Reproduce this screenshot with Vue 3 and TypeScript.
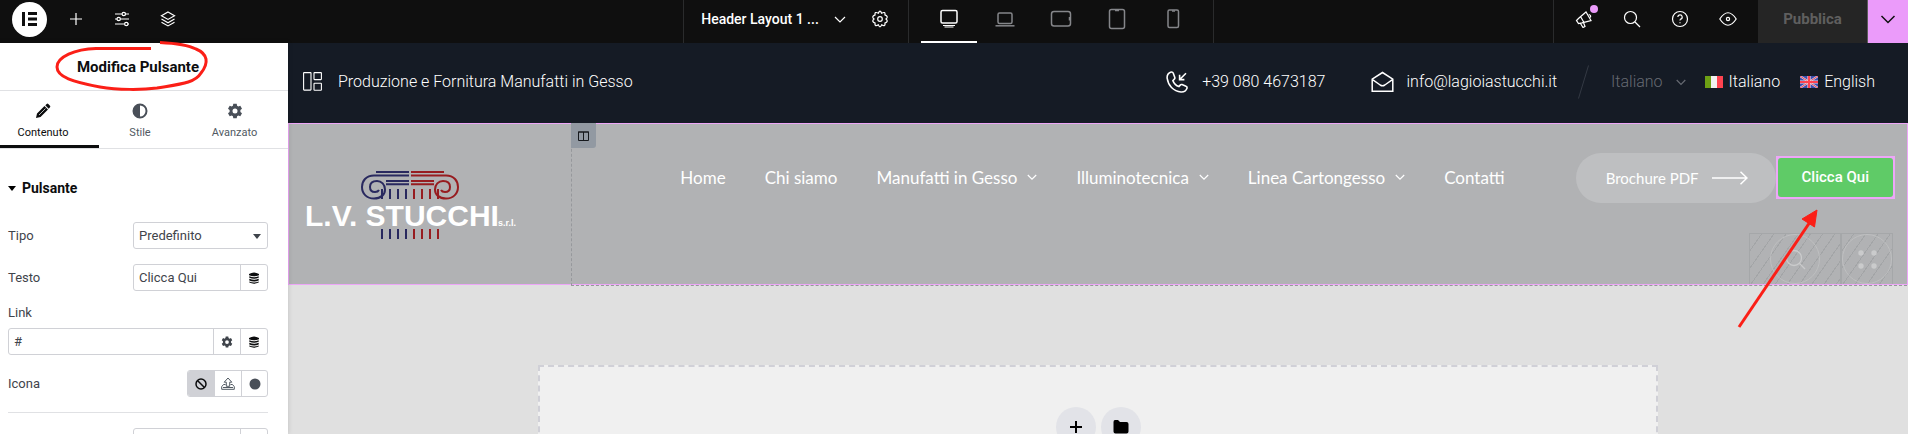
<script setup lang="ts">
import { ref } from 'vue'

interface NavItem {
  label: string
  menu: boolean
}

const nav: NavItem[] = [
  { label: 'Home', menu: false },
  { label: 'Chi siamo', menu: false },
  { label: 'Manufatti in Gesso', menu: true },
  { label: 'Illuminotecnica', menu: true },
  { label: 'Linea Cartongesso', menu: true },
  { label: 'Contatti', menu: false },
]

const tab = ref('Contenuto')
const device = ref('desktop')
const tipo = ref('Predefinito')
const testo = ref('Clicca Qui')
const link = ref('#')
const extra = ref('')
const fluteXs = [78, 86, 94, 102, 110, 118, 126, 134]
</script>

<template>
  <div class="editor">
    <header class="bar">
      <div class="bar-left">
        <button class="brand" aria-label="Menu">
          <svg width="35" height="35" viewBox="0 0 35 35"><circle cx="17.5" cy="17.5" r="17.5" fill="#fff" /><path d="M10 10h3v14h-3zM16 10h9v3h-9zM16 15.500h9v3h-9zM16 21h9v3h-9z" fill="#0f0f0f" /></svg>
        </button>
        <button class="tool" aria-label="Aggiungi">
          <svg width="16" height="16" viewBox="0 0 16 16"><path d="M8 2v12M2 8h12" class="ln" /></svg>
        </button>
        <button class="tool" aria-label="Impostazioni sito">
          <svg width="16" height="16" viewBox="0 0 16 16" class="ln"><path d="M1 3h7M11.500 3H15M1 8h2M6.500 8H15M1 13h9.500M14 13h1" /><circle cx="9.800" cy="3" r="1.700" /><circle cx="4.700" cy="8" r="1.700" /><circle cx="12.300" cy="13" r="1.700" /></svg>
        </button>
        <button class="tool" aria-label="Struttura">
          <svg width="16" height="16" viewBox="0 0 16 16" class="ln"><path d="M8 1l6.500 3.700L8 8.400 1.500 4.700zM1.500 8L8 11.700 14.500 8M1.500 11.200L8 14.900l6.500-3.700" /></svg>
        </button>
      </div>

      <div class="bar-doc">
        <button class="doc">Header Layout 1 ...
          <svg width="12" height="12" viewBox="0 0 12 12" class="ln"><path d="M1 4l5 5 5-5" /></svg>
        </button>
        <button class="gear" aria-label="Impostazioni pagina">
          <svg width="18" height="18" viewBox="0 0 18 18" class="ln"><path d="M7.400 3.200Q9-1 10.600 3.200 14.800 1.200 13.900 4.900 18 6.500 15 9 18 11.500 13.900 13.100 14.800 16.800 10.600 14.900 9 19 7.400 14.900 3.200 16.800 4.100 13.100 0 11.500 3 9 0 6.500 4.100 4.900 3.200 1.200 7.400 3.200z" /><circle cx="9" cy="9" r="2.300" /></svg>
        </button>
      </div>

      <div class="bar-devices">
        <button :class="['device', { on: device === 'desktop' }]" aria-label="Desktop" @click="device = 'desktop'">
          <svg width="20" height="20" viewBox="0 0 20 20"><rect x="2" y="1.500" width="16" height="12.500" rx="1.500" /><path d="M4 16.500h12M5.500 18h9" stroke-width="1" /></svg>
        </button>
        <button :class="['device', { on: device === 'laptop' }]" aria-label="Laptop" @click="device = 'laptop'">
          <svg width="20" height="20" viewBox="0 0 20 20"><rect x="3" y="4" width="14" height="10.500" rx="1.500" /><path d="M.500 16.800h19" /></svg>
        </button>
        <button :class="['device', { on: device === 'tablet-l' }]" aria-label="Tablet orizzontale" @click="device = 'tablet-l'">
          <svg width="22" height="20" viewBox="0 0 22 20"><rect x="1.500" y="2.500" width="19" height="14.500" rx="2.500" /><path d="M19.500 8v3.500" /></svg>
        </button>
        <button :class="['device', { on: device === 'tablet' }]" aria-label="Tablet" @click="device = 'tablet'">
          <svg width="20" height="22" viewBox="0 0 20 22"><rect x="2.500" y="1.500" width="15" height="19" rx="2" /><path d="M8 2.500h4" /></svg>
        </button>
        <button :class="['device', { on: device === 'phone' }]" aria-label="Telefono" @click="device = 'phone'">
          <svg width="20" height="22" viewBox="0 0 20 22"><rect x="5" y="2" width="10.500" height="17.500" rx="1.500" /><path d="M9 3h3" /></svg>
        </button>
      </div>

      <div class="bar-right">
        <div class="actions">
          <button class="act" aria-label="Novità">
            <svg width="18" height="18" viewBox="0 0 18 18" class="ln"><path d="M1.500 10.500L4 8l7-6 5 8.500-9 2.300-3.500.800zM5.800 7l3 5.200M5.500 13.500L8 17.500l2-1-1.500-4M13.800 4.500a2 2 0 0 1 1.500 3" /></svg>
            <i class="dot"></i>
          </button>
          <button class="act" aria-label="Cerca">
            <svg width="18" height="18" viewBox="0 0 18 18" class="ln"><circle cx="7.500" cy="7.500" r="6" /><path d="M12 12l5 5" /></svg>
          </button>
          <button class="act" aria-label="Aiuto">
            <svg width="18" height="18" viewBox="0 0 18 18" class="ln"><circle cx="9" cy="9" r="7.500" /><path d="M6.800 7a2.200 2.200 0 1 1 2.700 2.200Q9 9.400 9 10.500M9 12.300v1" /></svg>
          </button>
          <button class="act" aria-label="Anteprima">
            <svg width="18" height="18" viewBox="0 0 18 18" class="ln"><path d="M.800 9Q9-3.500 17.200 9 9 21.500.800 9z" /><circle cx="9" cy="9" r="1.600" /></svg>
          </button>
        </div>
        <button class="publish" disabled>Pubblica</button>
        <button class="publish-more" aria-label="Opzioni di salvataggio">
          <svg width="16" height="16" viewBox="0 0 16 16"><path d="M1.500 5L8 11.500 14.500 5" fill="none" stroke="#0f0f0f" stroke-width="1.500" /></svg>
        </button>
      </div>
    </header>

    <div class="work">
      <aside class="panel">
        <h1 class="panel-title">Modifica Pulsante</h1>
        <svg class="mark" width="158" height="52" viewBox="0 0 158 52"><path d="M98 7.500H43C22 8 4 16 4 26c0 10 16 15 43 20 18 3 42 3 57 1 24-4 38-5 44-15 8-10 7-19-5-24-10-5-26-6-36-6.500" fill="none" stroke="#fb1f17" stroke-width="3" /></svg>
        <nav class="tabs">
          <button :class="{ on: tab === 'Contenuto' }" @click="tab = 'Contenuto'">
            <svg width="16" height="16" viewBox="0 0 16 16"><path d="M1 15l1-4.500 7.500-7.500 3.500 3.500L5.500 14zM10.300 2.200l1.400-1.300q.800-.600 1.600.100l1.700 1.700q.700.800 0 1.600l-1.300 1.400z" /><path d="M4 12l6.500-6.500" stroke="#fff" stroke-width=".7" /></svg>
            <span>Contenuto</span>
          </button>
          <button :class="{ on: tab === 'Stile' }" @click="tab = 'Stile'">
            <svg width="16" height="16" viewBox="0 0 16 16"><path fill-rule="evenodd" d="M8 .500a7.500 7.500 0 1 1 0 15 7.500 7.500 0 0 1 0-15zm0 2v11a5.500 5.500 0 0 0 0-11z" /></svg>
            <span>Stile</span>
          </button>
          <button :class="{ on: tab === 'Avanzato' }" @click="tab = 'Avanzato'">
            <svg width="16" height="16" viewBox="0 0 16 16"><path fill-rule="evenodd" d="M6.300.800h3.400l.400 2 1.200.700 2-.700 1.700 2.900-1.600 1.400v1.800l1.600 1.400-1.700 2.900-2-.700-1.200.700-.400 2H6.300l-.400-2-1.200-.700-2 .700L1 10.300l1.600-1.400V7.100L1 5.700l1.700-2.900 2 .700 1.200-.700zM8 5.500a2.500 2.500 0 1 0 0 5 2.500 2.500 0 0 0 0-5z" /></svg>
            <span>Avanzato</span>
          </button>
        </nav>

        <section class="controls">
          <h2><svg width="8" height="5" viewBox="0 0 8 5"><path d="M0 0h8L4 5z" /></svg>Pulsante</h2>

          <div class="row">
            <label for="tipo">Tipo</label>
            <span class="field">
              <select id="tipo" v-model="tipo"><option>Predefinito</option></select>
              <svg class="caret" width="8" height="5" viewBox="0 0 8 5"><path d="M0 0h8L4 5z" /></svg>
            </span>
          </div>

          <div class="row">
            <label for="testo">Testo</label>
            <span class="field">
              <input id="testo" v-model="testo" type="text" />
              <button aria-label="Tag dinamici"><svg width="10" height="12" viewBox="0 0 10 12" class="db"><path d="M0 2q5-3 10 0v1.200q-5 2.200-10 0zM.300 4.200q4.700 2 9.400 0v1.600q-4.700 2-9.400 0zM.300 6.800q4.700 2 9.400 0v1.600q-4.700 2-9.400 0zM.300 9.400q4.700 2 9.400 0v1.200q-4.700 2.300-9.400 0z" /></svg></button>
            </span>
          </div>

          <div class="stack">
            <label for="link">Link</label>
            <span class="field wide">
              <input id="link" v-model="link" type="text" />
              <button aria-label="Opzioni link"><svg width="12" height="12" viewBox="0 0 16 16"><path fill-rule="evenodd" d="M6.300.800h3.400l.400 2 1.200.700 2-.700 1.700 2.900-1.600 1.400v1.800l1.600 1.400-1.700 2.900-2-.700-1.200.700-.400 2H6.300l-.400-2-1.200-.700-2 .700L1 10.300l1.600-1.400V7.100L1 5.700l1.700-2.900 2 .700 1.200-.700zM8 5.500a2.500 2.500 0 1 0 0 5 2.500 2.500 0 0 0 0-5z" /></svg></button>
              <button aria-label="Tag dinamici"><svg width="10" height="12" viewBox="0 0 10 12" class="db"><path d="M0 2q5-3 10 0v1.200q-5 2.200-10 0zM.300 4.200q4.700 2 9.400 0v1.600q-4.700 2-9.400 0zM.300 6.800q4.700 2 9.400 0v1.600q-4.700 2-9.400 0zM.300 9.400q4.700 2 9.400 0v1.200q-4.700 2.300-9.400 0z" /></svg></button>
            </span>
          </div>

          <div class="row">
            <span>Icona</span>
            <span class="field choices">
              <button class="picked" aria-label="Nessuna"><svg width="12" height="12" viewBox="0 0 12 12"><circle cx="6" cy="6" r="5" fill="none" stroke="#0c0d0e" stroke-width="1.500" /><path d="M2.500 2.500l7 7" stroke="#0c0d0e" stroke-width="1.500" /></svg></button>
              <button aria-label="Carica SVG"><svg width="14" height="13" viewBox="0 0 14 13"><path d="M4.500 7.500H2.500L.700 9.700v2.600h12.600V9.700l-1.800-2.200h-2M5.300 9.300V5.200H3.200L7 1l3.800 4.200H8.700v4.100zM2 10.500h10" fill="none" stroke="#515962" stroke-width="1" /></svg></button>
              <button aria-label="Libreria icone"><svg width="12" height="12" viewBox="0 0 12 12"><circle cx="6" cy="6" r="5.500" fill="#494f58" /></svg></button>
            </span>
          </div>

          <hr />

          <div class="row">
            <span></span>
            <span class="field">
              <input v-model="extra" type="text" aria-label="ID pulsante" />
              <button aria-label="Tag dinamici"></button>
            </span>
          </div>
        </section>
      </aside>

      <main class="canvas">
        <div class="info">
          <div class="info-left">
            <svg width="19" height="19" viewBox="0 0 19 19" fill="none" stroke="#fff" stroke-width="1.100"><rect x=".600" y=".600" width="7.400" height="17.500" rx=".5" /><rect x="11" y=".600" width="7.400" height="7" rx=".5" /><rect x="11" y="11.200" width="7.400" height="7" rx=".5" /></svg>
            <span>Produzione e Fornitura Manufatti in Gesso</span>
          </div>
          <div class="info-right">
            <a class="phone" href="#">
              <svg width="22" height="22" viewBox="0 0 22 22" fill="none" stroke="#fff" stroke-width="1.600"><path d="M4.500 1.200Q1 2.500 1.100 7 2 13 5.500 16.500 9.500 20.500 15 21q4.500.300 6-3.700.300-1.500-1-2L16 13.600q-1-.400-1.800.500l-1.300 1.500q-4.300-1.500-6-6L8.300 8.200q.800-.7.500-1.800L7.200 2Q6.500.500 4.500 1.200zM20 2.200l-6.300 6.300M13.600 3.800v4.800h4.800" /></svg>
              +39 080 4673187
            </a>
            <a class="mail" href="#">
              <svg width="23" height="22" viewBox="0 0 23 22" fill="none" stroke="#fff" stroke-width="1.500"><path d="M1.200 8.200L11.500 1.500l10.300 6.700v12H1.200zM1.200 8.400l8 5.600q2.300 1.500 4.600 0l8-5.600" /></svg>
              info@lagioiastucchi.it
            </a>
            <svg class="slash" width="11" height="34" viewBox="0 0 11 34"><path d="M10.500.500L.500 33.500" stroke="#343a44" /></svg>
            <button class="lang">Italiano
              <svg width="10" height="10" viewBox="0 0 10 10"><path d="M.700 3L5 7.300 9.300 3" fill="none" stroke="#666a72" stroke-width="1.200" /></svg>
            </button>
            <a class="flag" href="#">
              <svg width="18" height="12" viewBox="0 0 18 12"><path d="M0 0h6v12H0z" fill="#6da014" /><path d="M6 0h6v12H6z" fill="#f1f1f1" /><path d="M12 0h6v12h-6z" fill="#ff4350" /></svg>
              Italiano
            </a>
            <a class="flag" href="#">
              <svg width="18" height="12" viewBox="0 0 18 12"><path d="M0 0h18v12H0z" fill="#3a4db0" /><path d="M0 0l18 12M18 0L0 12" stroke="#d8d8ea" stroke-width="2" /><path d="M0 0l18 12M18 0L0 12" stroke="#f0414f" stroke-width="1" /><path d="M9 0v12M0 6h18" stroke="#f1d9de" stroke-width="3.200" /><path d="M9 0v12M0 6h18" stroke="#ff4350" stroke-width="2.200" /></svg>
              English
            </a>
          </div>
        </div>

        <div class="site-header">
          <div class="logo-col">
            <svg width="216" height="76" viewBox="0 0 216 76" role="img" aria-label="L.V. Stucchi s.r.l.">
              <g fill="none" stroke-width="2" stroke="#29295f">
                <path d="M72 6h33M105 9.500H70C62 9.500 58 15 58 21c0 7 5 11.500 12 11.500S81 28.500 81 23.500 77.500 15 73 15s-7 2.500-7 6 2 5 5 5 3.500-1 4-2M82 15h23M82 18.300h23" />
              </g>
              <g fill="none" stroke-width="2" stroke="#971c20" transform="translate(212) scale(-1 1)">
                <path d="M72 6h33M105 9.500H70C62 9.500 58 15 58 21c0 7 5 11.500 12 11.500S81 28.500 81 23.500 77.500 15 73 15s-7 2.500-7 6 2 5 5 5 3.500-1 4-2M82 15h23M82 18.300h23" />
              </g>
              <path v-for="(x, i) in fluteXs" :key="x" :d="`M${x} 23v10M${x} 63v10`" stroke-width="2" :stroke="i < 4 ? '#29295f' : '#971c20'" />
              <text x="1" y="60" class="logo-name">L.V. STUCCHI</text>
              <text x="194" y="60" class="logo-srl">s.r.l.</text>
            </svg>
          </div>

          <div class="menu-col">
            <button class="handle" aria-label="Modifica colonna">
              <svg width="11" height="10" viewBox="0 0 11 10" fill="none" stroke="#16191d"><path d="M.500 1h10v8.500H.500zM5.500 1v8.500M0 1h11" /></svg>
            </button>
            <div class="menu-row">
              <nav class="menu">
                <a v-for="item in nav" :key="item.label" href="#">
                  {{ item.label }}
                  <svg v-if="item.menu" width="10" height="10" viewBox="0 0 10 10"><path d="M.800 3L5 7.200 9.200 3" fill="none" stroke="#fff" stroke-width="1.200" /></svg>
                </a>
              </nav>
              <a class="brochure" href="#">Brochure PDF
                <svg width="36" height="14" viewBox="0 0 36 14"><path d="M0 7h35M28.500.700L35 7l-6.500 6.300" fill="none" stroke="#fff" stroke-width="1.500" /></svg>
              </a>
              <div class="selected"><button>Clicca Qui</button></div>
            </div>
            <div class="hidden-row">
              <div class="ghost search">
                <svg width="50" height="50" viewBox="0 0 50 50" fill="none" stroke="#cacbcc"><circle cx="25" cy="25" r="24.500" stroke="#bebfc0" /><circle cx="24" cy="24" r="7.500" stroke-width="1.300" /><path d="M29.500 29.500l5.500 5.500" stroke-width="1.300" /></svg>
              </div>
              <div class="ghost dots">
                <svg width="50" height="50" viewBox="0 0 50 50" fill="#cacbcc"><circle cx="25" cy="25" r="24.500" fill="none" stroke="#bebfc0" /><circle cx="19" cy="19" r="2.700" /><circle cx="32" cy="19" r="2.700" /><circle cx="19" cy="32" r="2.700" /><circle cx="32" cy="32" r="2.700" /></svg>
              </div>
            </div>
          </div>
          <svg class="arrow" width="84" height="120" viewBox="0 0 84 120"><path d="M2 118L73 13" stroke="#fb1f17" stroke-width="3" /><path d="M80 1L65 10l12.500 8z" fill="#fb1f17" stroke="#fb1f17" /></svg>
        </div>

        <div class="dropzone">
          <button aria-label="Aggiungi nuova sezione"><svg width="12" height="12" viewBox="0 0 12 12"><path d="M6 0v12M0 6h12" stroke="#000" stroke-width="2" /></svg></button>
          <button aria-label="Aggiungi template"><svg width="16" height="14" viewBox="0 0 16 14"><path d="M2 0h3l2 2h6.500Q15.500 2 15.500 4v7.500q0 2-2 2h-11q-2 0-2-2V2Q.500 0 2 0z" /></svg></button>
        </div>
      </main>
    </div>
  </div>
</template>

<style>
body {
  margin: 0;
}
</style>

<style scoped>
* {
  box-sizing: border-box;
}
button,
input,
select {
  margin: 0;
  padding: 0;
  border: 0;
  background: none;
  font: inherit;
  color: inherit;
}
a {
  color: inherit;
  text-decoration: none;
}
svg {
  display: block;
  flex: none;
}
.editor {
  height: 100vh;
  display: flex;
  flex-direction: column;
  overflow: hidden;
  font-family: Roboto, 'Liberation Sans', sans-serif;
}
.ln {
  fill: none;
  stroke: #fff;
  stroke-width: 1.2;
}

/* editor bar */
.bar {
  flex: none;
  display: flex;
  height: 43px;
  background: #0f0f0f;
  color: #fff;
}
.bar-left {
  flex: 671 1 0;
  display: flex;
  align-items: center;
  padding: 0 0 5px 12px;
}
.brand {
  margin-right: 6px;
}
.tool {
  width: 46px;
  display: flex;
  justify-content: center;
}
.bar-doc {
  display: flex;
  align-items: center;
  border-left: 1px solid #2a2b2c;
  padding: 0 19px 5px 17px;
  gap: 25px;
}
.doc {
  display: flex;
  align-items: center;
  gap: 15px;
  font-size: 14px;
  font-weight: 500;
  white-space: nowrap;
}
.bar-devices {
  display: flex;
  border-left: 1px solid #2a2b2c;
  border-right: 1px solid #2a2b2c;
  padding: 0 12px;
}
.device {
  width: 56px;
  display: flex;
  align-items: center;
  justify-content: center;
  border-bottom: 2px solid transparent;
  padding-bottom: 3px;
}
.device svg {
  fill: none;
  stroke: #85868a;
  stroke-width: 1.5;
}
.device.on {
  border-bottom-color: #fff;
}
.device.on svg {
  stroke: #fff;
}
.bar-right {
  flex: 694 1 0;
  display: flex;
  justify-content: flex-end;
}
.actions {
  display: flex;
  border-left: 1px solid #2a2b2c;
  padding: 0 6px 5px;
}
.act {
  position: relative;
  width: 48px;
  display: flex;
  align-items: center;
  justify-content: center;
}
.dot {
  position: absolute;
  top: 5px;
  right: 10px;
  width: 8px;
  height: 8px;
  border-radius: 50%;
  background: #eb9bfa;
}
.publish {
  width: 109px;
  padding-bottom: 5px;
  background: #252525;
  color: #5f5f5f;
  font-size: 15px;
  font-weight: 700;
}
.publish-more {
  width: 41px;
  display: flex;
  align-items: center;
  justify-content: center;
  padding-bottom: 5px;
  border-left: 1px solid #5b5b5b;
  background: #eb9bfa;
}

.work {
  flex: 1;
  min-height: 0;
  display: flex;
}

/* side panel */
.panel {
  position: relative;
  z-index: 1;
  flex: none;
  width: 288px;
  background: #fff;
  color: #3f444b;
  font-size: 13px;
  box-shadow: 0 0 5px rgba(0, 0, 0, 0.15);
}
.panel-title {
  margin: 0;
  height: 48px;
  padding-right: 12px;
  border-bottom: 1px solid #e0e1e4;
  text-align: center;
  font-size: 15px;
  font-weight: 700;
  line-height: 49px;
  color: #0c0d0e;
}
.mark {
  position: absolute;
  left: 53px;
  top: -2px;
}
.tabs {
  display: grid;
  grid-template-columns: 99fr 82fr 107fr;
  height: 58px;
  border-bottom: 1px solid #e0e1e4;
}
.tabs button {
  display: flex;
  flex-direction: column;
  align-items: center;
  gap: 6px;
  padding-top: 12px;
  border-bottom: 3px solid transparent;
  font-size: 11px;
  line-height: 16px;
  color: #515962;
  fill: #494f58;
}
.tabs button:first-child {
  padding-right: 13px;
}
.tabs .on {
  border-bottom-color: #0c0d0e;
  color: #0c0d0e;
  fill: #0c0d0e;
}
.controls {
  display: flex;
  flex-direction: column;
  gap: 15px;
  padding: 29px 20px 0 8px;
}
.controls h2 {
  display: flex;
  align-items: center;
  gap: 6px;
  margin: 0 0 9px;
  height: 20px;
  font-size: 14px;
  font-weight: 700;
  color: #0c0d0e;
}
.row {
  display: flex;
  align-items: center;
  justify-content: space-between;
  height: 27px;
}
.stack {
  display: flex;
  flex-direction: column;
  gap: 8px;
  line-height: 14px;
}
.field {
  position: relative;
  display: flex;
  width: 135px;
  height: 27px;
  border: 1px solid #d0d1d6;
  border-radius: 3px;
  overflow: hidden;
}
.field.wide {
  width: 100%;
}
.field.choices {
  width: 81px;
}
.field input,
.field select {
  flex: 1;
  min-width: 0;
  padding: 0 5px;
  appearance: none;
}
.caret {
  position: absolute;
  right: 6px;
  top: 11px;
  fill: #3f444b;
}
.field button {
  flex: none;
  display: flex;
  align-items: center;
  justify-content: center;
  width: 27px;
  border-left: 1px solid #d0d1d6;
  fill: #3f444b;
}
.field .db {
  fill: #0c0d0e;
}
.choices button:first-child {
  width: 26px;
  border-left: 0;
}
.choices .picked {
  background: #d0d1d6;
}
hr {
  width: 100%;
  margin: 0;
  border: 0;
  border-top: 1px solid #e0e1e4;
}

/* page preview */
.canvas {
  flex: 1;
  min-width: 0;
  background: #e0e0e0;
}
.info {
  display: flex;
  align-items: center;
  justify-content: space-between;
  height: 80px;
  padding: 0 33px 3px 15px;
  background: #151b25;
  color: #fff;
  font-size: 16px;
  font-weight: 300;
  white-space: nowrap;
}
.info-left,
.info-right,
.info-right a,
.lang {
  display: flex;
  align-items: center;
}
.info-left {
  gap: 16px;
}
.info-right .phone {
  gap: 14px;
  margin-right: 46px;
}
.info-right .mail {
  gap: 12px;
}
.slash {
  margin: 0 22px 0 21px;
}
.lang {
  gap: 13px;
  margin-right: 19px;
  color: #666a72;
}
.info-right .flag {
  gap: 6px;
}
.flag + .flag {
  margin-left: 20px;
}
.site-header {
  position: relative;
  display: grid;
  grid-template-columns: 349fr 1651fr;
  height: 162px;
  border: 1px solid #eda6f8;
  background: #b1b2b4;
  color: #fff;
}
.logo-col {
  padding: 42px 0 0 15px;
}
.logo-name {
  font: 700 30px 'Liberation Sans', sans-serif;
  fill: #fff;
}
.logo-srl {
  font: 700 9px 'Liberation Sans', sans-serif;
  fill: #fff;
}
.menu-col {
  position: relative;
  margin-bottom: -2px;
  border-left: 1px dashed #96989c;
  border-bottom: 1px dashed #96989c;
  padding: 29px 12px 0 108px;
}
.handle {
  position: absolute;
  left: -1px;
  top: -1px;
  display: flex;
  align-items: center;
  justify-content: center;
  width: 25px;
  height: 25px;
  border-bottom-right-radius: 3px;
  background: #9299a2;
}
.menu-row {
  display: flex;
  align-items: center;
  height: 50px;
}
.menu {
  display: flex;
  gap: 39px;
  padding-bottom: 2px;
  font-family: Lato, sans-serif;
  font-size: 17px;
  white-space: nowrap;
}
.menu a {
  display: flex;
  align-items: center;
  gap: 10px;
}
.brochure {
  display: flex;
  align-items: center;
  gap: 13px;
  height: 50px;
  margin-left: auto;
  padding: 0 28px 0 30px;
  border-radius: 25px;
  background: #bebfc1;
  font-family: Lato, sans-serif;
  font-size: 15px;
  white-space: nowrap;
}
.selected {
  margin-bottom: 2px;
  border: 2px solid #eda6f8;
  background: #eda6f8;
}
.selected button {
  display: block;
  height: 39px;
  padding: 0 24px;
  border-radius: 3px;
  background: #5fcb67;
  font-size: 15px;
  font-weight: 500;
  white-space: nowrap;
}
.hidden-row {
  display: flex;
  justify-content: flex-end;
  height: 51px;
  margin: 30px 2px 0 0;
}
.ghost {
  display: flex;
  justify-content: center;
  border: 1px solid #a5a7a9;
  border-bottom: 0;
  background: repeating-linear-gradient(125deg, transparent 0 9px, #a3a5a7 9px 10px);
}
.ghost.search {
  width: 92px;
}
.ghost.dots {
  width: 52px;
}
.arrow {
  position: absolute;
  right: 86px;
  top: 85px;
}
.dropzone {
  display: flex;
  justify-content: center;
  gap: 5px;
  width: 1120px;
  max-width: 90%;
  height: 200px;
  margin: 80px auto 0;
  padding-top: 40px;
  border: 2px dashed #d0d0d7;
  background: #f0f0f0;
}
.dropzone button {
  display: flex;
  align-items: center;
  justify-content: center;
  width: 40px;
  height: 40px;
  border-radius: 50%;
  background: #e2e3e8;
}
</style>
